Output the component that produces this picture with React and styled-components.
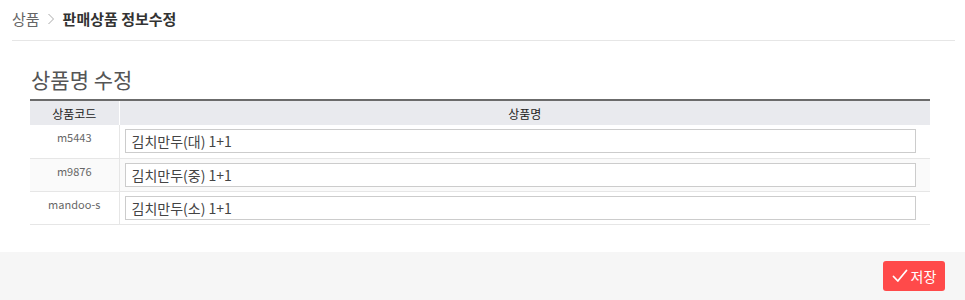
import React from 'react'
import styled, { createGlobalStyle } from 'styled-components'

const GlobalStyle = createGlobalStyle`
  html, body {
    margin: 0;
    padding: 0;
    background: #fff;
    font-family: 'Noto Sans CJK KR', 'Noto Sans', sans-serif;
    color: #333;
  }
  * { box-sizing: border-box; }
`

const rows = [
  { code: 'm5443', name: '김치만두(대) 1+1' },
  { code: 'm9876', name: '김치만두(중) 1+1' },
  { code: 'mandoo-s', name: '김치만두(소) 1+1' },
]

const App = () => {
  return (
    <Page>
      <GlobalStyle />
      <Breadcrumb>
        <Crumb>상품</Crumb>
        <Chevron viewBox='0 0 8 12' width='8' height='12'>
          <path d='M1.5 1 L6.5 6 L1.5 11' fill='none' stroke='#aaa' strokeWidth='1' />
        </Chevron>
        <Crumb current>판매상품 정보수정</Crumb>
      </Breadcrumb>
      <Content>
        <Title>상품명 수정</Title>
        <Table>
          <colgroup>
            <col style={{ width: 89 }} />
            <col />
          </colgroup>
          <thead>
            <tr>
              <Th>상품코드</Th>
              <Th>상품명</Th>
            </tr>
          </thead>
          <tbody>
            {rows.map((r, i) => (
              <Row key={r.code} striped={i % 2 === 1}>
                <CodeCell>{r.code}</CodeCell>
                <NameCell>
                  <NameInput defaultValue={r.name} />
                </NameCell>
              </Row>
            ))}
          </tbody>
        </Table>
      </Content>
      <Footer>
        <SaveButton>
          <svg viewBox='0 0 16 16' width='16' height='16'>
            <path d='M1.5 8.5 L5.8 13 L14.5 2.5' fill='none' stroke='#fff' strokeWidth='1.8' strokeLinecap='round' strokeLinejoin='round' />
          </svg>
          저장
        </SaveButton>
      </Footer>
    </Page>
  )
}

const Page = styled.div`
  width: 965px;
  height: 300px;
  display: flex;
  flex-direction: column;
  overflow: hidden;
`

const Breadcrumb = styled.div`
  margin: 0 10px 0 12px;
  height: 41px;
  padding-top: 8px;
  display: flex;
  align-items: flex-start;
  gap: 7px;
  border-bottom: 1px solid #e6e6e6;
`

const Crumb = styled.span`
  font-size: 15px;
  line-height: 21px;
  color: ${(p) => (p.current ? '#333' : '#666')};
  font-weight: ${(p) => (p.current ? 700 : 400)};
`

const Chevron = styled.svg`
  margin-top: 5px;
  margin-right: 1px;
`

const Content = styled.div`
  padding: 24px 35px 0 30px;
  flex: 1;
`

const Title = styled.h2`
  margin: 0 0 6px 1px;
  font-size: 21px;
  font-weight: 400;
  line-height: 28px;
  color: #555;
`

const Table = styled.table`
  width: 900px;
  border-collapse: collapse;
  border-top: 2px solid #6b6b6b;
  table-layout: fixed;
`

const Th = styled.th`
  height: 25px;
  background: #e9eaee;
  font-size: 12px;
  font-weight: 400;
  color: #222;
  text-align: center;
  padding: 0;
  & + & {
    border-left: 1px solid #fff;
  }
`

const Row = styled.tr`
  background: ${(p) => (p.striped ? '#fafafa' : '#fff')};
  border-bottom: 1px solid #e6e6e6;
`

const CodeCell = styled.td`
  height: 33px;
  padding: 4px 0 0;
  vertical-align: top;
  text-align: center;
  font-size: 11px;
  line-height: 16px;
  color: #666;
  border-right: 1px solid #e6e6e6;
`

const NameCell = styled.td`
  padding: 3px 14px 3px 5px;
  vertical-align: middle;
`

const NameInput = styled.input`
  display: block;
  width: 100%;
  height: 24px;
  border: 1px solid #ccc;
  padding: 0 6px;
  font-family: 'Noto Sans CJK KR', 'Noto Sans', sans-serif;
  font-size: 14px;
  color: #444;
  background: #fff;
  outline: none;
`

const Footer = styled.div`
  height: 48px;
  background: #f6f6f6;
  display: flex;
  justify-content: flex-end;
  align-items: flex-start;
  padding: 9px 20px 0 0;
`

const SaveButton = styled.button`
  width: 62px;
  height: 30px;
  border: none;
  border-radius: 3px;
  background: #ff4a4a;
  color: #fff;
  font-family: 'Noto Sans CJK KR', 'Noto Sans', sans-serif;
  font-size: 14px;
  display: flex;
  align-items: center;
  justify-content: center;
  gap: 3px;
  padding: 0;
`

export default App
